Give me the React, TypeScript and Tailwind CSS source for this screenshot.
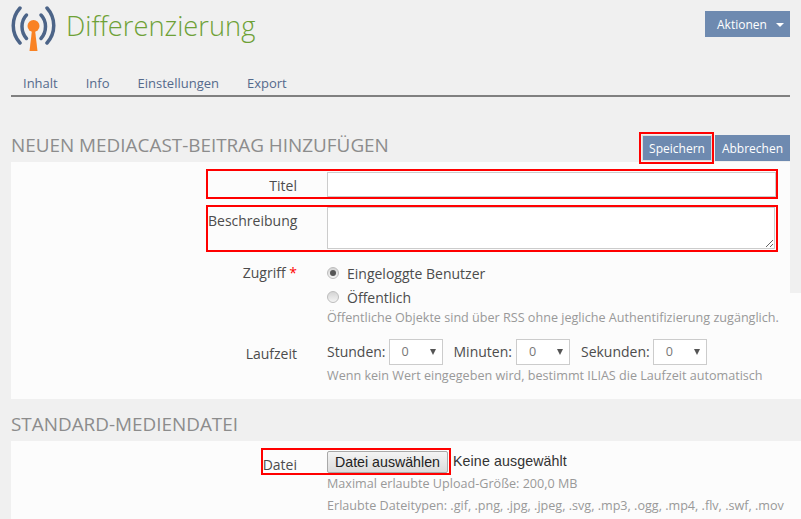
/**
 * Mediacast item form, with the review markers over the changed fields.
 */
import type { ReactNode } from 'react';

const tabs = ['Inhalt', 'Info', 'Einstellungen', 'Export'];

// Broadcast antenna logo next to the page title.
function AntennaIcon() {
  return (
    <svg width="46" height="46" viewBox="11 6 46 46" fill="none" className="shrink-0">
      <g stroke="#4c6488" strokeWidth="3.5" strokeLinecap="round">
        <path d="M20 8 C11 18 11 33 20 43" />
        <path d="M47 8 C56 18 56 33 47 43" />
        <path d="M26.500 15 C20.500 21 20.500 32 26.500 38.500" />
        <path d="M41 15 C47 21 47 32 41 38.500" />
      </g>
      <circle cx="33.500" cy="26" r="6" fill="#f98224" />
      <path d="M32 30 L35 30 L37.500 51 L29.500 51 Z" fill="#f98224" />
    </svg>
  );
}

function Select() {
  return (
    <div className="flex h-[26px] w-[54px] shrink-0 items-center justify-between border border-[#cccccc] bg-white pr-[6px] pl-3 text-[12.600px] text-[#777777]">
      <span>0</span>
      <span className="mb-[1px] h-0 w-0 border-x-[3px] border-t-[6px] border-x-transparent border-t-[#555555]" />
    </div>
  );
}

function Radio({ checked }: { checked?: boolean }) {
  return (
    <span className="flex h-3 w-3 shrink-0 items-center justify-center rounded-full border border-[#bdbdbd] bg-gradient-to-b from-[#d4d4d4] to-[#f4f4f4]">
      {checked && <span className="h-[6px] w-[6px] rounded-full bg-[#555555]" />}
    </span>
  );
}

// Label column plus field column, as in the ILIAS property form.
function FormRow({ label, children, className }: { label: ReactNode; children: ReactNode; className?: string }) {
  return (
    <div className={`relative flex ${className ?? ''}`}>
      <div className="w-[286px] shrink-0 text-right">{label}</div>
      <div className="ml-[30px] min-w-0 flex-1">{children}</div>
    </div>
  );
}

function Marker({ className }: { className: string }) {
  return <div className={`pointer-events-none absolute z-10 border-2 border-[#ff0000] ${className}`} />;
}

function Help({ children }: { children: ReactNode }) {
  return <p className="text-[12.600px] leading-[22px] whitespace-nowrap text-[#999999]">{children}</p>;
}

function SectionTitle({ children }: { children: ReactNode }) {
  return <h2 className="text-[18.900px] leading-[24px] whitespace-nowrap text-[#8c8c8c]">{children}</h2>;
}

export default function App() {
  return (
    <div className="h-[519px] w-[801px] overflow-hidden bg-[#f0f0f0] font-['Open_Sans',sans-serif] text-[14px] text-[#4c4c4c]">
      <header className="flex h-[97px] flex-col pl-[11px]">
        <div className="flex items-start justify-between pr-[11px]">
          <div className="flex items-center gap-[9px] pt-[6px]">
            <AntennaIcon />
            <h1 className="mb-[7px] text-[27.300px] leading-[34px] font-light text-[#6ea136]">Differenzierung</h1>
          </div>
          <button className="mt-[11px] flex h-[26px] w-[85px] items-center gap-[9px] bg-[#6e8ab0] pt-[1px] pl-[12px] text-[12px] text-white">
            Aktionen
            <span className="h-0 w-0 border-x-[4px] border-t-[4px] border-x-transparent border-t-white" />
          </button>
        </div>
        <nav className="mt-auto mr-[11px] flex gap-[28px] border-b-2 border-[#808080] pb-[3px] pl-[12px] text-[13px] leading-[18px] text-[#556a8c]">
          {tabs.map((tab) => (
            <span key={tab}>{tab}</span>
          ))}
        </nav>
      </header>

      <div className="mt-[38px] flex h-[27px] items-start justify-between px-[11px]">
        <div className="-mt-[2px]">
          <SectionTitle>NEUEN MEDIACAST-BEITRAG HINZUFÜGEN</SectionTitle>
        </div>
        <div className="flex gap-[3px] text-[12px] text-white">
          <div className="relative">
            <button className="h-[26px] w-[70px] border border-[#dddddd] bg-[#6e8ab0] pt-[1px]">Speichern</button>
            <Marker className="-top-[3px] -left-[3px] h-[32px] w-[75px]" />
          </div>
          <button className="h-[26px] w-[75px] bg-[#6e8ab0] pt-[1px]">Abbrechen</button>
        </div>
      </div>

      <section className="relative ml-[11px] h-[237px] bg-[#fcfcfc]">
        {/* page background shows through beside the upper part of the panel */}
        <div className="absolute top-0 right-0 h-[131px] w-[11px] bg-[#f0f0f0]" />

        <FormRow className="pt-[10px]" label={<span className="block h-[25px] leading-[28px]">Titel</span>}>
          <div className="mr-[25px] h-[25px] border border-[#cccccc] bg-white" />
          <Marker className="top-[7px] left-[195px] h-[30px] w-[572px]" />
        </FormRow>

        <FormRow
          className="pt-[10px]"
          label={<span className="block pl-[197px] text-left leading-[28px]">Beschreibung</span>}
        >
          <textarea className="mr-[25px] block h-[42px] w-[448px] border border-[#cccccc] bg-white" />
          <Marker className="top-[8px] left-[195px] h-[47px] w-[572px]" />
        </FormRow>

        <FormRow
          className="pt-[12px]"
          label={
            <span className="leading-[24px]">
              Zugriff <span className="text-[#ff0000]">*</span>
            </span>
          }
        >
          <div className="flex h-[24px] items-center gap-2">
            <Radio checked />
            <span>Eingeloggte Benutzer</span>
          </div>
          <div className="flex h-[24px] items-center gap-2">
            <Radio />
            <span>Öffentlich</span>
          </div>
          <div className="-mt-[2px]">
            <Help>Öffentliche Objekte sind über RSS ohne jegliche Authentifizierung zugänglich.</Help>
          </div>
        </FormRow>

        <FormRow className="pt-[10px]" label={<span className="leading-[30px]">Laufzeit</span>}>
          <div className="flex items-center">
            <span className="mr-[3px] pb-[2px]">Stunden:</span>
            <Select />
            <span className="mr-1 ml-[11px] pb-[2px]">Minuten:</span>
            <Select />
            <span className="mr-[3px] ml-[11px] pb-[2px]">Sekunden:</span>
            <Select />
          </div>
          <Help>Wenn kein Wert eingegeben wird, bestimmt ILIAS die Laufzeit automatisch</Help>
        </FormRow>
      </section>

      <div className="flex h-[42px] items-center px-[11px] pt-[7px]">
        <SectionTitle>STANDARD-MEDIENDATEI</SectionTitle>
      </div>

      <section className="ml-[11px] h-[78px] bg-[#fcfcfc]">
        <FormRow className="pt-[10px]" label={<span className="leading-[28px]">Datei</span>}>
          <div className="flex h-[22px] items-center gap-[5px] font-['Liberation_Sans',sans-serif] text-[14.200px] text-[#333333]">
            <button className="h-[22px] w-[121px] rounded-[2px] border border-[#a9a9a9] bg-gradient-to-b from-[#f4f4f4] to-[#dcdcdc] text-[#222222]">
              Datei auswählen
            </button>
            <span className="tracking-[0.12px]">Keine ausgewählt</span>
          </div>
          <Marker className="top-[7px] left-[250px] h-[27px] w-[190px]" />
          <Help>Maximal erlaubte Upload-Größe: 200,0 MB</Help>
          <Help>Erlaubte Dateitypen: .gif, .png, .jpg, .jpeg, .svg, .mp3, .ogg, .mp4, .flv, .swf, .mov</Help>
        </FormRow>
      </section>
    </div>
  );
}
